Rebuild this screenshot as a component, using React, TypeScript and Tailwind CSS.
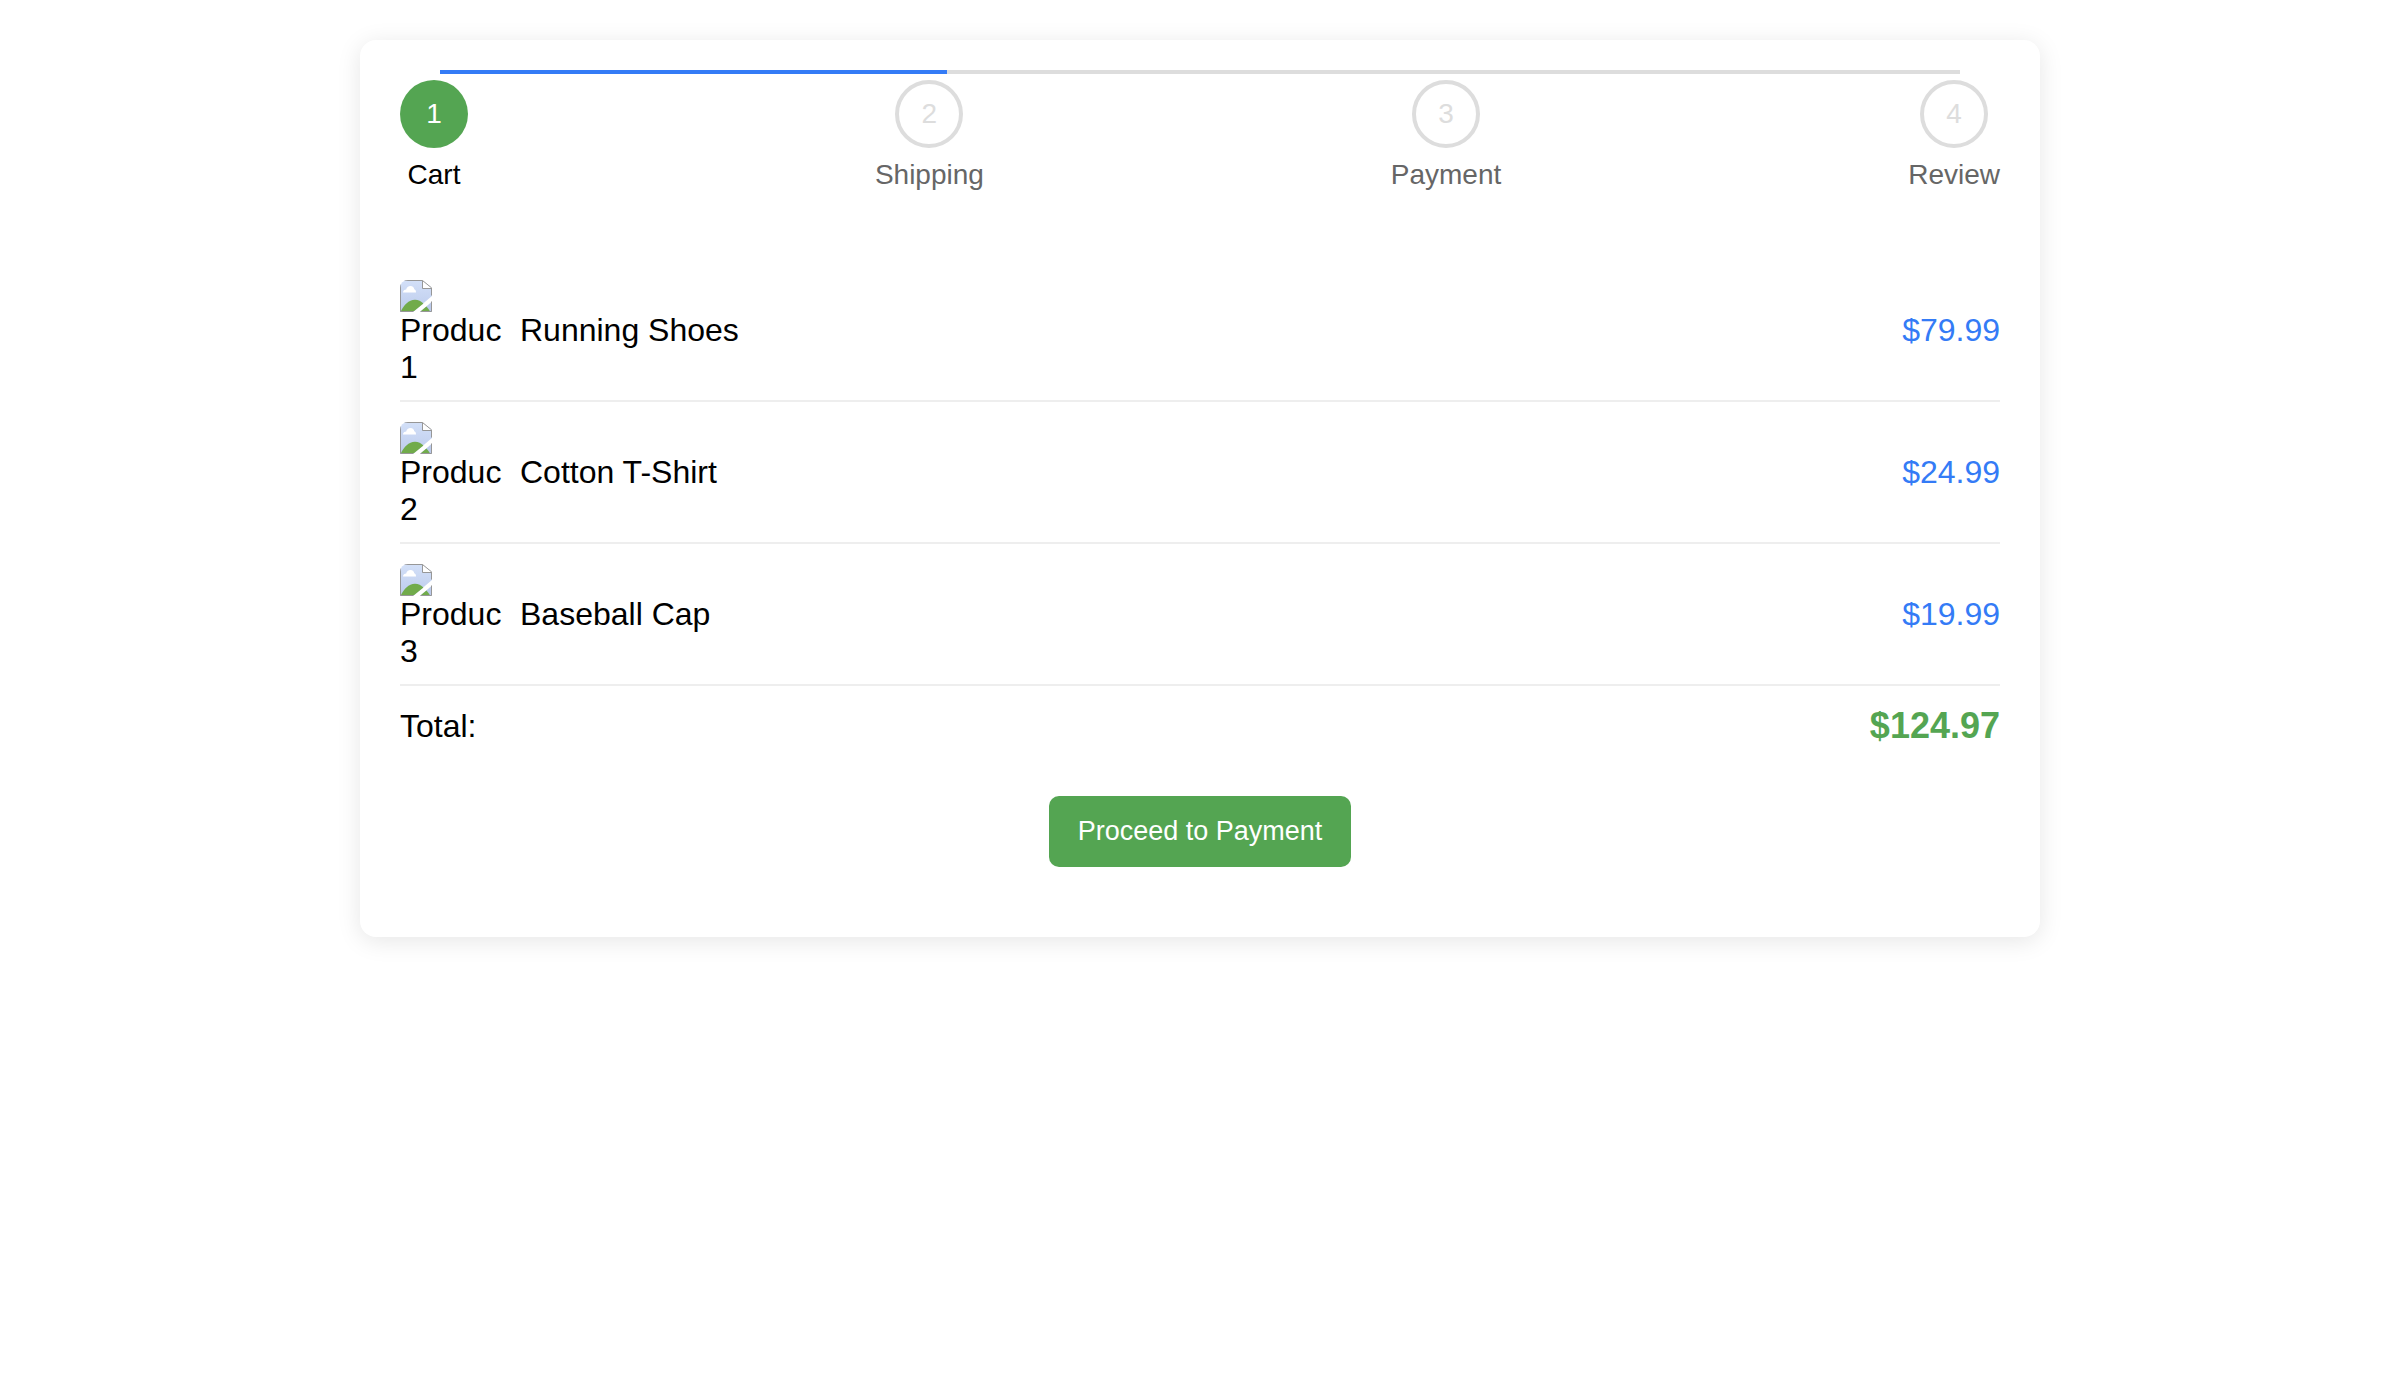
import React from "react";

const steps = ["Cart", "Shipping", "Payment", "Review"];

const products = [
  { name: "Running Shoes", price: "$79.99" },
  { name: "Cotton T-Shirt", price: "$24.99" },
  { name: "Baseball Cap", price: "$19.99" },
];

const total = "$124.97";

function MissingPictureIcon({ gradientId }: { gradientId: string }) {
  return (
    <svg viewBox="0 0 32 32" className="block size-8 overflow-hidden rounded-tl-lg" aria-hidden="true">
      <defs>
        <linearGradient id={gradientId} gradientUnits="userSpaceOnUse" x1="0" y1="0" x2="0" y2="32">
          <stop offset="0" stopColor="#d3e0f8" />
          <stop offset="1" stopColor="#bccbec" />
        </linearGradient>
      </defs>
      <path d="M0 0H22L32 8V16L13 32H0Z" fill={`url(#${gradientId})`} />
      <path d="M32 21.5V32H20Z" fill="#bccbec" />
      <path d="M22 0L32 8H22Z" fill="#fff" />
      <path d="M3 12.6C3 10.6 4.5 9.5 6.2 9.5C6.6 7.2 8.3 6 10.5 6C12.8 6 14 7.4 14.3 9.3C15.5 9.7 16 10.7 16 12.6Z" fill="#fff" />
      <path d="M1 31C4 25 8.5 19.7 15 19.7C18.5 19.7 21 21.3 23.4 23.4L14.2 31Z" fill="#71ab4b" />
      <path d="M26.4 26.5C27.8 28 29 29.5 29.8 31H21Z" fill="#71ab4b" />
      <path d="M0.5 0V31.5H13.5M0 0.5H22.5L31.5 7.8V15.5M22.5 0.5V8.5H32M31.5 21.5V31.5H20.5" fill="none" stroke="#979797" strokeWidth="1" />
    </svg>
  );
}

function Thumbnail({ position }: { position: number }) {
  return (
    <div role="img" aria-label={`Product ${position}`} className="size-[100px] shrink-0 leading-[37px]">
      <MissingPictureIcon gradientId={`sky-${position}`} />
      <div>Produc</div>
      <div>{position}</div>
    </div>
  );
}

function Stepper({ current }: { current: number }) {
  return (
    <nav aria-label="Checkout progress">
      <div className="mx-10 h-1 bg-[#ddd]">
        <div className="h-full w-1/3 bg-[#347bf6]" />
      </div>
      <ol className="mt-1.5 flex justify-between text-[28px] leading-[34px]">
        {steps.map((step, i) => (
          <li key={step} className="flex flex-col items-center gap-2.5" aria-current={i === current ? "step" : undefined}>
            <span
              className={
                i === current
                  ? "flex size-[68px] items-center justify-center rounded-full bg-[#54a552] text-white"
                  : "flex size-[68px] items-center justify-center rounded-full border-4 border-[#ddd] text-[#ddd]"
              }
            >
              {i + 1}
            </span>
            <span className={i === current ? "text-black" : "text-[#666]"}>{step}</span>
          </li>
        ))}
      </ol>
    </nav>
  );
}

export default function App() {
  return (
    <main className="min-h-screen bg-white py-10 font-['Liberation_Sans',Arial,sans-serif] text-[32px] leading-9 text-black">
      <section className="mx-auto w-[70%] rounded-2xl bg-white px-10 pt-[30px] pb-[70px] shadow-[0_4px_24px_rgba(0,0,0,0.1)]">
        <Stepper current={0} />
        <ul className="mt-[68px]">
          {products.map((product, i) => (
            <li key={product.name} className="flex items-center gap-5 border-b-2 border-[#eee] py-5">
              <Thumbnail position={i + 1} />
              <span className="flex-1">{product.name}</span>
              <span className="text-[#347bf6]">{product.price}</span>
            </li>
          ))}
        </ul>
        <div className="mt-5 flex items-center justify-between">
          <span>Total:</span>
          <strong className="text-4xl font-bold text-[#54a552]">{total}</strong>
        </div>
        <div className="mt-[50px] flex justify-center">
          <button type="button" className="rounded-[10px] bg-[#54a552] px-[29px] py-5 text-[27px] leading-[31px] text-white">
            Proceed to Payment
          </button>
        </div>
      </section>
    </main>
  );
}
